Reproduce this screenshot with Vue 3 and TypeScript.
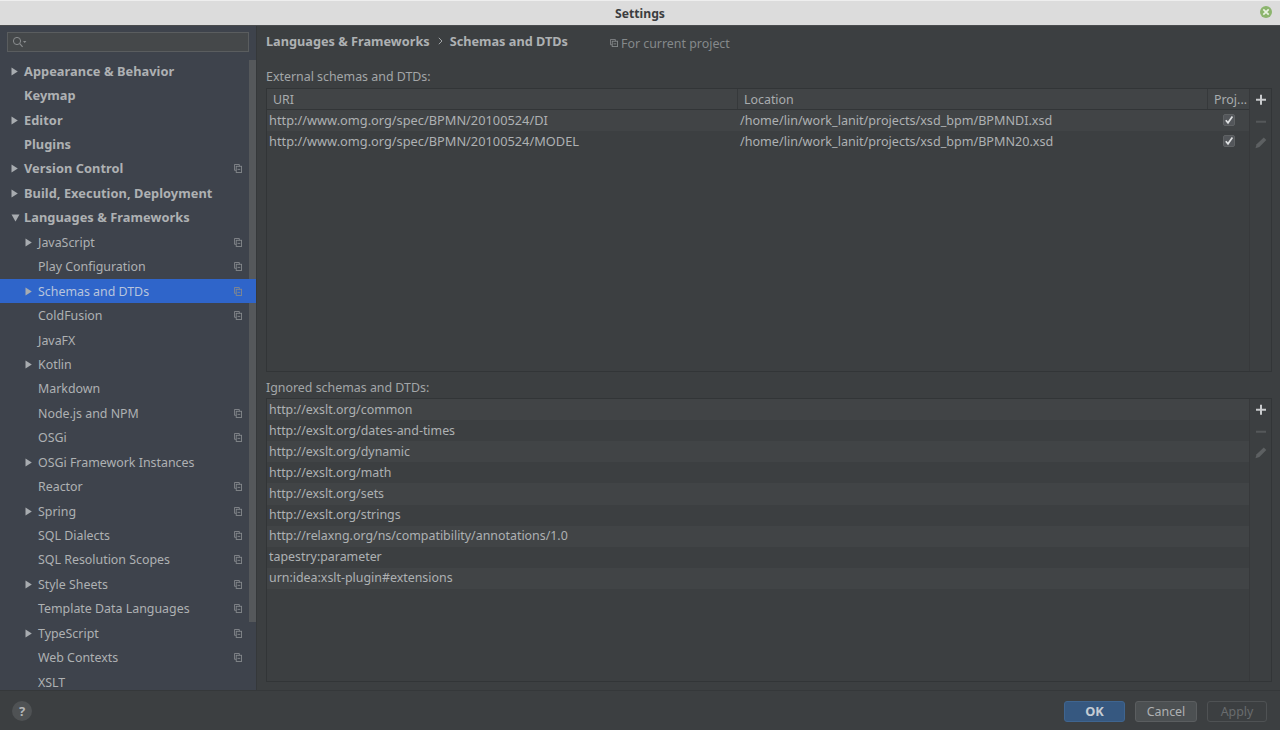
<script setup lang="ts">
interface NavItem { label: string; bold?: boolean; level: number; arrow?: 'right' | 'down'; copy?: boolean; selected?: boolean }
const nav: NavItem[] = [
  { label: 'Appearance & Behavior', bold: true, level: 0, arrow: 'right' },
  { label: 'Keymap', bold: true, level: 0 },
  { label: 'Editor', bold: true, level: 0, arrow: 'right' },
  { label: 'Plugins', bold: true, level: 0 },
  { label: 'Version Control', bold: true, level: 0, arrow: 'right', copy: true },
  { label: 'Build, Execution, Deployment', bold: true, level: 0, arrow: 'right' },
  { label: 'Languages & Frameworks', bold: true, level: 0, arrow: 'down' },
  { label: 'JavaScript', level: 1, arrow: 'right', copy: true },
  { label: 'Play Configuration', level: 1, copy: true },
  { label: 'Schemas and DTDs', level: 1, arrow: 'right', copy: true, selected: true },
  { label: 'ColdFusion', level: 1, copy: true },
  { label: 'JavaFX', level: 1 },
  { label: 'Kotlin', level: 1, arrow: 'right' },
  { label: 'Markdown', level: 1 },
  { label: 'Node.js and NPM', level: 1, copy: true },
  { label: 'OSGi', level: 1, copy: true },
  { label: 'OSGi Framework Instances', level: 1, arrow: 'right' },
  { label: 'Reactor', level: 1, copy: true },
  { label: 'Spring', level: 1, arrow: 'right', copy: true },
  { label: 'SQL Dialects', level: 1, copy: true },
  { label: 'SQL Resolution Scopes', level: 1, copy: true },
  { label: 'Style Sheets', level: 1, arrow: 'right', copy: true },
  { label: 'Template Data Languages', level: 1, copy: true },
  { label: 'TypeScript', level: 1, arrow: 'right', copy: true },
  { label: 'Web Contexts', level: 1, copy: true },
  { label: 'XSLT', level: 1 },
]
const external = [
  { uri: 'http://www.omg.org/spec/BPMN/20100524/DI', loc: '/home/lin/work_lanit/projects/xsd_bpm/BPMNDI.xsd' },
  { uri: 'http://www.omg.org/spec/BPMN/20100524/MODEL', loc: '/home/lin/work_lanit/projects/xsd_bpm/BPMN20.xsd' },
]
const ignored = [
  'http://exslt.org/common',
  'http://exslt.org/dates-and-times',
  'http://exslt.org/dynamic',
  'http://exslt.org/math',
  'http://exslt.org/sets',
  'http://exslt.org/strings',
  'http://relaxng.org/ns/compatibility/annotations/1.0',
  'tapestry:parameter',
  'urn:idea:xslt-plugin#extensions',
]
</script>

<template>
  <div class="window">
    <header class="titlebar">
      <span class="title">Settings</span>
      <span class="close">
        <svg width="8" height="8" viewBox="0 0 8 8"><path d="M1.3 1.3 6.7 6.7M6.7 1.3 1.3 6.7" stroke="#e9f2e2" stroke-width="1.7" /></svg>
      </span>
    </header>
    <div class="main">
      <aside class="sidebar">
        <div class="search">
          <svg width="16" height="12" viewBox="0 0 16 12" class="search-icon">
            <circle cx="5" cy="5" r="3.6" fill="none" stroke="#8a8d8f" stroke-width="1" />
            <path d="M7.7 7.7 10.6 10.8" stroke="#8a8d8f" stroke-width="1.1" />
            <path d="M11 5h3.4l-1.7 2z" fill="#8a8d8f" />
          </svg>
        </div>
        <div class="tree-wrap">
          <div class="scrollbar"></div>
          <ul class="tree">
            <li v-for="item in nav" :key="item.label" class="row" :class="{ selected: item.selected, bold: item.bold, child: item.level === 1 }">
              <span class="arrow-slot">
                <svg v-if="item.arrow === 'right'" width="7" height="9" viewBox="0 0 7 9"><path d="M0.5 0.5 6.8 4.5 0.5 8.5z" fill="#a8acb0" /></svg>
                <svg v-else-if="item.arrow === 'down'" width="9" height="8" viewBox="0 0 9 8"><path d="M0.5 0.5h8L4.5 7.5z" fill="#a8acb0" /></svg>
              </span>
              <span class="label">{{ item.label }}</span>
              <svg v-if="item.copy" class="copy" width="8" height="9" viewBox="0 0 9 10">
                <path d="M2.5 7H.5V.5h5.5v2" fill="none" stroke="#85898d" />
                <rect x="2.5" y="2.5" width="6" height="7" fill="none" stroke="#85898d" />
                <path d="M4 6h3" stroke="#85898d" />
              </svg>
            </li>
          </ul>
        </div>
      </aside>
      <section class="content">
        <div class="crumbs">
          <span class="crumb">Languages &amp; Frameworks</span>
          <svg class="sep" width="5" height="8" viewBox="0 0 5 8"><path d="M.8.8 4 4 .8 7.2" fill="none" stroke="#a0a4a6" /></svg>
          <span class="crumb">Schemas and DTDs</span>
          <span class="scope">
            <svg width="8" height="8" viewBox="0 0 9 9">
              <path d="M2.5 6.5H.5V.5h5.5v2" fill="none" stroke="#85898b" />
              <rect x="2.5" y="2.5" width="6" height="6" fill="none" stroke="#85898b" />
              <path d="M4 5.5h3" stroke="#85898b" />
            </svg>
            For current project
          </span>
        </div>
        <div class="group-label first">External schemas and DTDs:</div>
        <div class="panel">
          <div class="grid">
            <div class="thead">
              <div class="th uri">URI</div>
              <div class="th loc">Location</div>
              <div class="th proj">Proj...</div>
            </div>
            <div v-for="(r, i) in external" :key="r.uri" class="tr" :class="{ odd: i % 2 === 0 }">
              <div class="td uri">{{ r.uri }}</div>
              <div class="td loc">{{ r.loc }}</div>
              <div class="td proj">
                <span class="check">
                  <svg width="10" height="10" viewBox="0 0 10 10"><path d="M1.8 5.2 4 7.8 8.4 1.6" fill="none" stroke="#dfe1e2" stroke-width="1.7" /></svg>
                </span>
              </div>
            </div>
          </div>
          <div class="tools">
            <svg width="10" height="10" viewBox="0 0 10 10"><path d="M5 0v10M0 5h10" stroke="#c9cbcd" stroke-width="2" /></svg>
            <svg width="10" height="10" viewBox="0 0 10 10"><path d="M0 5h10" stroke="#55585a" stroke-width="2" /></svg>
            <svg width="12" height="12" viewBox="0 0 12 12"><path d="M.5 11.5 1.6 7.6 8.8.7 11.3 3.2 4.4 10.3z" fill="#5d6062" /></svg>
          </div>
        </div>
        <div class="group-label second">Ignored schemas and DTDs:</div>
        <div class="panel">
          <div class="grid list">
            <div v-for="(u, i) in ignored" :key="u" class="tr" :class="{ odd: i % 2 === 0 }">
              <div class="td">{{ u }}</div>
            </div>
          </div>
          <div class="tools">
            <svg width="10" height="10" viewBox="0 0 10 10"><path d="M5 0v10M0 5h10" stroke="#c9cbcd" stroke-width="2" /></svg>
            <svg width="10" height="10" viewBox="0 0 10 10"><path d="M0 5h10" stroke="#55585a" stroke-width="2" /></svg>
            <svg width="12" height="12" viewBox="0 0 12 12"><path d="M.5 11.5 1.6 7.6 8.8.7 11.3 3.2 4.4 10.3z" fill="#5d6062" /></svg>
          </div>
        </div>
      </section>
    </div>
    <footer class="footer">
      <span class="help">?</span>
      <div class="buttons">
        <button class="btn ok" type="button">OK</button>
        <button class="btn cancel" type="button">Cancel</button>
        <button class="btn apply" type="button">Apply</button>
      </div>
    </footer>
  </div>
</template>

<style>
html, body { margin: 0; background: #3c3f41; }
</style>

<style scoped>
* { box-sizing: border-box; }
.window {
  width: 1280px; height: 730px; display: flex; flex-direction: column; overflow: hidden;
  background: #3c3f41; color: #aeb1b3;
  font-family: "Noto Sans", "Open Sans", sans-serif; font-size: 12.4px;
}
.titlebar {
  height: 26px; flex: none; position: relative; display: flex; align-items: center; justify-content: center;
  background: #dcdcdc; border-bottom: 1px solid #4a4c4e; border-top: 1px solid #eeeeee;
}
.title { font-size: 12.2px; font-weight: 700; color: #3b3d3f; }
.close {
  position: absolute; right: 8px; top: 5px; width: 12px; height: 12px; border-radius: 50%;
  background: #8cb56e; display: flex; align-items: center; justify-content: center;
}
.main { flex: 1; display: flex; min-height: 0; }
.sidebar {
  width: 257px; flex: none; background: #3e434c; border-right: 1px solid #35383a;
  display: flex; flex-direction: column; min-height: 0; overflow: hidden;
}
.search {
  margin: 6px 7px 0 7px; height: 20px; flex: none; background: #45484a; border: 1px solid #5a5d5f;
  display: flex; align-items: center; padding-left: 4px;
}
.tree-wrap { flex: 1; position: relative; min-height: 0; margin-top: 7px; overflow: hidden; }
.tree { list-style: none; margin: 0; padding: 0; position: relative; }
.row {
  height: 24.44px; display: flex; align-items: center; padding-left: 11px; padding-right: 14px;
}
.row.child { padding-left: 25px; }
.row.bold .label { font-weight: 700; font-size: 12.8px; letter-spacing: .05px; padding-bottom: 1px; }
.row.selected { background: #2f65ca; color: #b8c4dc; }
.arrow-slot { width: 13px; flex: none; display: flex; align-items: center; }
.label { flex: 1; white-space: nowrap; }
.copy { flex: none; }
.scrollbar { position: absolute; right: 0; top: 1px; width: 7px; height: 562px; background: #55585b; }
.content { flex: 1; min-width: 0; padding: 0 8px 0 9px; display: flex; flex-direction: column; }
.crumbs { height: 30px; display: flex; align-items: center; flex: none; }
.crumb { font-weight: 700; font-size: 12.72px; color: #aeb1b3; }
.sep { margin: 0 7px 0 8px; }
.scope { margin-left: 42px; color: #85898b; display: flex; align-items: center; gap: 3px; margin-top: 4px; }
.group-label { height: 18px; line-height: 18px; flex: none; color: #a3a6a8; }
.group-label.first { margin-top: 12px; margin-bottom: 2px; }
.group-label.second { margin-top: 7px; margin-bottom: 1px; }
.panel { height: 284px; flex: none; border: 1px solid #323537; display: flex; }
.grid { flex: 1; min-width: 0; }
.tools {
  width: 22px; flex: none; border-left: 1px solid #37393b; display: flex; flex-direction: column;
  align-items: center;
}
.tools svg { height: 21.5px; }
.thead { height: 21px; display: flex; background: #414446; border-bottom: 1px solid #323537; }
.th { color: #a9acae; padding-left: 6px; line-height: 22px; border-right: 1px solid #36393b; }
.th.uri { width: 471px; }
.th.loc { width: 470px; }
.th.proj { flex: 1; border-right: 0; white-space: nowrap; overflow: hidden; }
.tr { height: 21px; display: flex; align-items: center; }
.list .tr { height: 21.12px; }
.tr.odd { background: #414446; }
.td { padding: 0 0 1px 2px; white-space: nowrap; color: #aeb1b3; }
.td.uri { width: 471px; font-size: 12.8px; }
.td.loc { width: 470px; font-size: 12.6px; }
.td.proj { flex: 1; display: flex; justify-content: center; padding: 0 0 1px; }
.check {
  width: 12px; height: 12px; background: #53565a; border: 1px solid #5f6264; border-radius: 2px;
  display: flex; align-items: center; justify-content: center;
}
.footer { height: 40px; flex: none; display: flex; align-items: center; justify-content: space-between; padding: 1px 13px 0 12px; border-top: 1px solid #35383a; }
.help {
  width: 20px; height: 20px; border-radius: 50%; background: #4f5254; color: #b4b7b9;
  display: flex; align-items: center; justify-content: center; font-weight: 700; font-size: 13px;
}
.buttons { display: flex; gap: 10px; }
.btn { height: 21px; font: inherit; border-radius: 3px; padding: 0; line-height: 17px; }
.ok { width: 61px; background: #365880; border: 1px solid #3f6590; color: #c5ccd4; font-weight: 700; font-size: 12.8px; }
.cancel { width: 62px; background: #4c5052; border: 1px solid #5b5e60; color: #aeb1b3; }
.apply { width: 60px; background: #3c3f41; border: 1px solid #4f5254; color: #696c6e; }
</style>
